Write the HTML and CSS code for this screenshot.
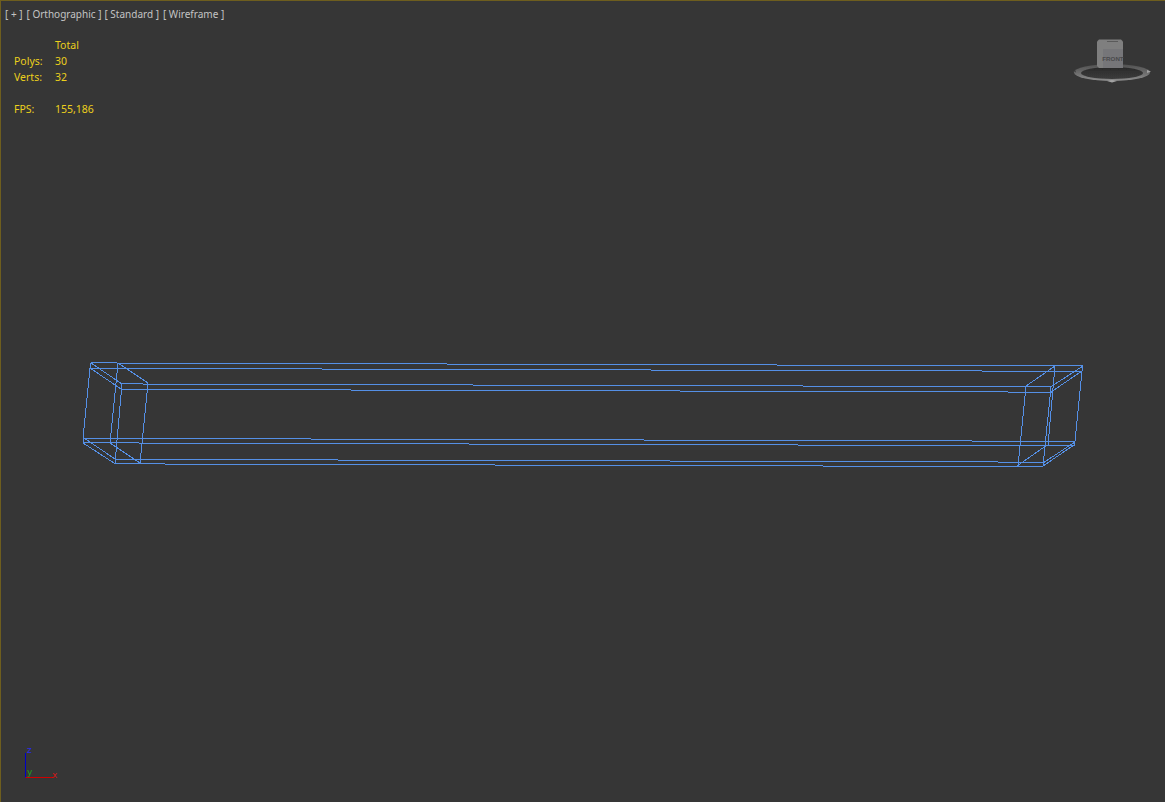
FILE: index.html
```html
<!DOCTYPE html>
<html lang="en">
<head>
  <meta charset="UTF-8">
  <title>Viewport</title>
  <link rel="stylesheet" href="styles.css">
</head>
<body>
  <div id="viewport">
    <!-- wireframe box -->
    <svg id="wire" width="1165" height="802" viewBox="0 0 1165 802">
      <g class="edges">
        <!-- long edges -->
        <line x1="91" y1="362.929" x2="1083" y2="365.935"/>
        <line x1="90" y1="368.302" x2="1082" y2="371.308"/>
        <line x1="122" y1="383.944" x2="1052" y2="386.763"/>
        <line x1="121" y1="389.314" x2="1053" y2="392.138"/>
        <line x1="83" y1="438.311" x2="1075" y2="441.317"/>
        <line x1="83" y1="442.841" x2="1075" y2="445.847"/>
        <line x1="115" y1="459.329" x2="1043" y2="462.141"/>
        <line x1="114" y1="463.857" x2="1043" y2="466.672"/>
        <!-- left end -->
        <line x1="91" y1="363" x2="90" y2="368"/>
        <line x1="90" y1="368" x2="83" y2="438"/>
        <line x1="83" y1="438" x2="83" y2="443"/>
        <line x1="118" y1="363" x2="110" y2="443"/>
        <line x1="122" y1="384" x2="115" y2="463"/>
        <line x1="148" y1="383" x2="140" y2="463"/>
        <line x1="91" y1="363" x2="122" y2="384"/>
        <line x1="90" y1="368" x2="121" y2="389"/>
        <line x1="118" y1="363" x2="148" y2="383"/>
        <line x1="84" y1="438" x2="115" y2="459"/>
        <line x1="83" y1="443" x2="114" y2="463"/>
        <line x1="110" y1="443" x2="140" y2="463"/>
        <!-- right end -->
        <line x1="1083" y1="365" x2="1082" y2="371"/>
        <line x1="1082" y1="371" x2="1075" y2="441"/>
        <line x1="1075" y1="441" x2="1074" y2="445"/>
        <line x1="1055" y1="366" x2="1048" y2="445"/>
        <line x1="1026" y1="386" x2="1018" y2="466"/>
        <line x1="1051" y1="387" x2="1043" y2="466"/>
        <line x1="1055" y1="366" x2="1026" y2="386"/>
        <line x1="1083" y1="366" x2="1052" y2="386"/>
        <line x1="1082" y1="371" x2="1051" y2="392"/>
        <line x1="1075" y1="442" x2="1043" y2="463"/>
        <line x1="1074" y1="445" x2="1043" y2="466"/>
        <line x1="1047" y1="445" x2="1017" y2="466"/>
      </g>
    </svg>

    <div id="labels">
      <span class="tag tag-plus">[ + ]</span>
      <span class="tag tag-view">[ Orthographic ]</span>
      <span class="tag tag-shade">[ Standard ]</span>
      <span class="tag">[ Wireframe ]</span>
    </div>

    <div id="stats">
      <span></span><span>Total</span>
      <span>Polys:</span><span>30</span>
      <span>Verts:</span><span>32</span>
      <span></span><span></span>
      <span>FPS:</span><span>155,186</span>
    </div>

    <!-- view cube -->
    <svg id="cube" width="90" height="50" viewBox="1070 36 90 50">
      <defs>
        <linearGradient id="ringShade" x1="0" y1="0" x2="0" y2="1">
          <stop offset="0" stop-color="#505050"/>
          <stop offset="0.5" stop-color="#6a6a6a"/>
          <stop offset="1" stop-color="#8e8e8e"/>
        </linearGradient>
        <linearGradient id="ringHole" x1="0" y1="0" x2="0" y2="1">
          <stop offset="0" stop-color="#292929"/>
          <stop offset="1" stop-color="#3c3c3c"/>
        </linearGradient>
        <filter id="soft" x="-10%" y="-10%" width="120%" height="120%">
          <feGaussianBlur stdDeviation="0.5"/>
        </filter>
      </defs>
      <g filter="url(#soft)">
        <ellipse cx="1112" cy="72.500" rx="38" ry="8.500" fill="url(#ringShade)"/>
        <ellipse cx="1112" cy="73" rx="31" ry="6" fill="url(#ringHole)"/>
        <path d="M1073 71.500l3-1v2z" fill="#4a4a4a"/>
        <path d="M1151 71.500l-4-1.500v3z" fill="#a0a0a0"/>
        <path d="M1107 81l5-1 5 1-5 1.500z" fill="#a4a4a4"/>
      </g>
      <path d="M1099 39.500h22l2 2v26.500h-24l-2-2v-24.500z" fill="#7f7f7f"/>
      <rect x="1103" y="49" width="20" height="19" fill="#767679"/>
      <rect x="1107" y="41" width="11" height="1" fill="#5a5a5a"/>
      <text class="cube-face" x="1113" y="61" text-anchor="middle">FRONT</text>
    </svg>

    <!-- world axis -->
    <div id="axis">
      <span class="axis-z">z</span>
      <span class="axis-y">y</span>
      <span class="axis-x">x</span>
    </div>
  </div>
</body>
</html>
```

FILE: styles.css
```css
body {
  margin: 0;
  background: #363636;
  overflow: hidden;
}

#viewport {
  position: relative;
  width: 1165px;
  height: 802px;
  box-sizing: border-box;
  background: #363636;
  border-top: 1px solid #6e5e1e;
  border-left: 1px solid #6e5e1e;
  font-family: "Noto Sans", sans-serif;
  font-size: 10px;
  overflow: hidden;
}

#wire {
  position: absolute;
  left: -1px;
  top: -1px;
}

.edges line {
  stroke: #5590e6;
  stroke-width: 1;
  shape-rendering: crispEdges;
}

#labels {
  position: absolute;
  left: 4px;
  top: 6px;
  display: flex;
  color: #c4c4c4;
  line-height: 14px;
  white-space: pre;
}

.tag-plus {
  margin-right: 4px;
}

.tag-view {
  margin-right: 3px;
}

.tag-shade {
  margin-right: 4px;
}

#stats {
  position: absolute;
  left: 13px;
  top: 36px;
  display: grid;
  grid-template-columns: 41px auto;
  grid-auto-rows: 16px;
  color: #ecd01c;
  font-size: 10.500px;
  line-height: 16px;
}

#cube {
  position: absolute;
  left: 1069px;
  top: 35px;
}

.cube-face {
  font-family: "Liberation Sans", sans-serif;
  font-size: 6.200px;
  font-weight: bold;
  fill: #4a4a4c;
}

#axis {
  position: absolute;
  left: 24px;
  top: 752px;
  width: 28px;
  height: 24px;
  border-left: 1px solid #0000c8;
  border-bottom: 1px solid #d00000;
  font-family: "DejaVu Sans", sans-serif;
  font-size: 9px;
  line-height: 8px;
}

#axis span {
  position: absolute;
}

.axis-z {
  left: 1px;
  top: -7px;
  color: #2a2aee;
}

.axis-y {
  left: 1px;
  top: 15px;
  color: #1fa01f;
}

.axis-x {
  left: 26px;
  top: 18px;
  color: #d01818;
}
```
